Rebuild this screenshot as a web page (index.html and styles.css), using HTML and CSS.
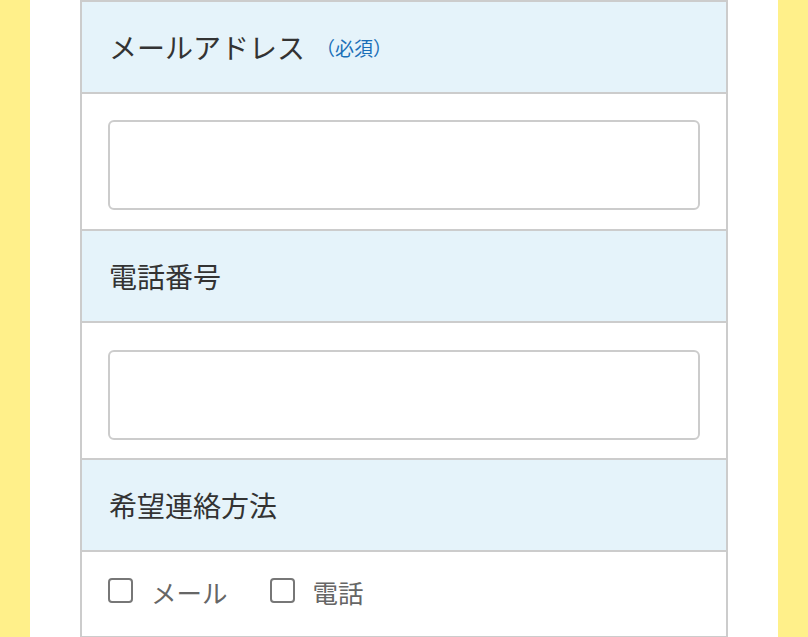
FILE: index.html
```html
<!DOCTYPE html>
<html lang="ja">
<head>
<meta charset="utf-8">
<title>お問い合わせ</title>
<link rel="stylesheet" href="styles.css">
</head>
<body>
<div class="page">
  <div class="form">
    <div class="row head"><span class="label">メールアドレス</span><span class="req">（必須）</span></div>
    <div class="row field"><input class="input" type="email"></div>
    <div class="row head"><span class="label">電話番号</span></div>
    <div class="row field field-b"><input class="input" type="tel"></div>
    <div class="row head"><span class="label">希望連絡方法</span></div>
    <div class="row choices">
      <label class="choice"><span class="box"></span><span class="choice-text">メール</span></label>
      <label class="choice"><span class="box"></span><span class="choice-text">電話</span></label>
    </div>
  </div>
</div>
</body>
</html>
```

FILE: styles.css
```css
html, body {
  margin: 0;
  padding: 0;
}
body {
  background: #fff08a;
  font-family: "Noto Sans CJK JP", "Noto Sans", sans-serif;
  height: 637px;
  overflow: hidden;
}
.page {
  background: #ffffff;
  margin: 0 30px;
  padding: 0 50px;
  height: 637px;
}
.form {
  border: 2px solid #cccccc;
  border-bottom: none;
}
.row {
  border-bottom: 2px solid #cccccc;
  box-sizing: border-box;
}
.head {
  background: #e5f3fa;
  height: 92px;
  display: flex;
  align-items: center;
  padding-left: 27px;
}
.label {
  font-size: 28px;
  color: #333333;
  line-height: 1;
}
.req {
  font-size: 19px;
  color: #1a6fb8;
  margin-left: 11px;
  line-height: 1;
}
.field {
  height: 137px;
  padding: 26px 26px 0;
}
.field-b {
  padding-top: 27px;
}
.input {
  display: block;
  width: 100%;
  height: 90px;
  box-sizing: border-box;
  border: 2px solid #cccccc;
  border-radius: 6px;
  background: #ffffff;
  margin: 0;
  padding: 0 12px;
  outline: none;
}
.choices {
  height: 86px;
  display: flex;
  align-items: center;
  padding: 0 0 8px 26px;
  gap: 42px;
}
.choice {
  display: flex;
  align-items: center;
  gap: 18px;
}
.box {
  width: 25px;
  height: 25px;
  box-sizing: border-box;
  border: 2px solid #777777;
  border-radius: 4px;
  background: #ffffff;
}
.choice-text {
  font-size: 25.5px;
  color: #666666;
  line-height: 1;
  position: relative;
  top: 2px;
}
```
